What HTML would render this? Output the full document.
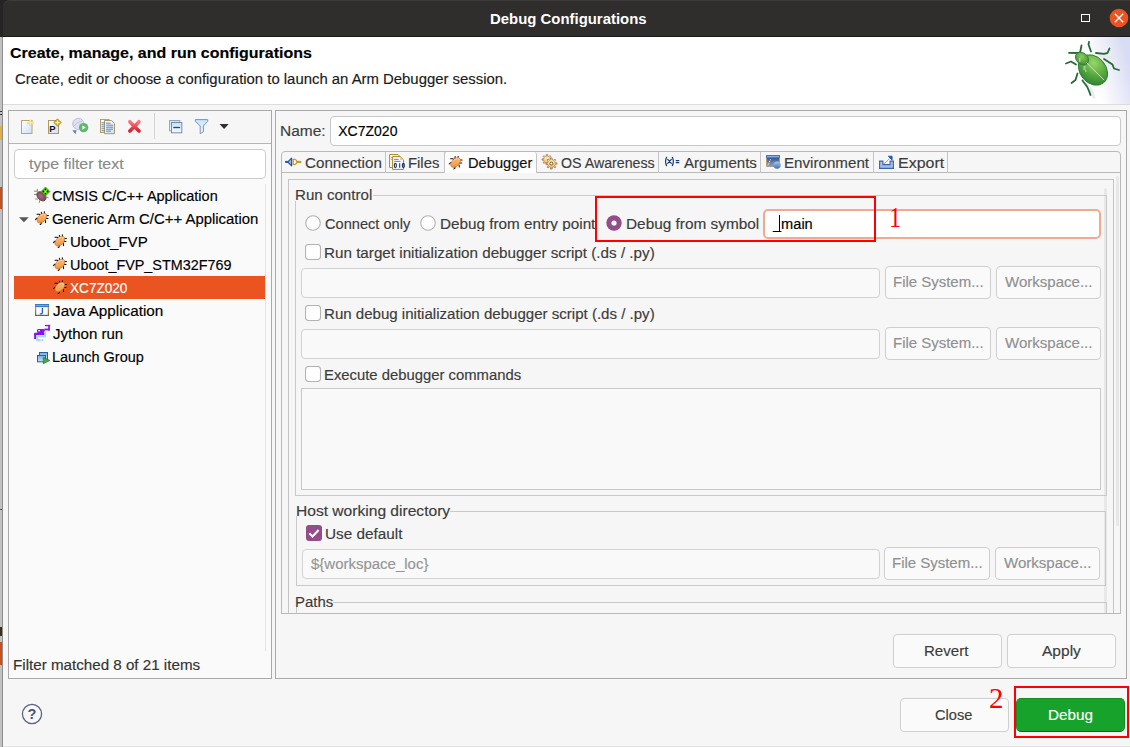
<!DOCTYPE html>
<html><head><meta charset="utf-8"><title>Debug Configurations</title>
<style>
html,body{margin:0;padding:0}
body{width:1130px;height:747px;overflow:hidden;position:relative;background:#f6f6f6;font-family:"Liberation Sans",sans-serif}
.a{position:absolute}
.t{position:absolute;white-space:nowrap;transform-origin:0 0;-webkit-text-stroke:0.15px currentColor}
</style></head><body>
<div class="a" style="left:0px;top:0px;width:14px;height:37px;background:#262424"></div>
<div class="a" style="left:0px;top:37px;width:3px;height:710px;background:#c2c2c2"></div>
<div class="a" style="left:2px;top:37px;width:1px;height:710px;background:#8e8e8e"></div>
<div class="a" style="left:0px;top:111px;width:2px;height:1px;background:#333"></div>
<div class="a" style="left:0px;top:114px;width:2px;height:1px;background:#333"></div>
<div class="a" style="left:0px;top:126px;width:2px;height:14px;background:#e0b050"></div>
<div class="a" style="left:0px;top:187px;width:2px;height:22px;background:#c8501c"></div>
<div class="a" style="left:0px;top:627px;width:2px;height:9px;background:#3a3020"></div>
<div class="a" style="left:0px;top:642px;width:2px;height:23px;background:#c8501c"></div>
<div class="a" style="left:0px;top:509px;width:2px;height:1px;background:#555"></div>
<div class="a" style="left:3px;top:0px;width:1127px;height:37px;background:#302d2d;border-top-left-radius:7px;box-shadow:inset 0 1px 0 #3d3a3a"></div>
<div class="a" style="left:3px;top:36px;width:1127px;height:1px;background:#1c1b1b"></div>
<div class="t" style="left:490.00px;top:11.53px;font-size:14.5px;line-height:14.5px;font-weight:700;color:#ffffff;transform:scaleX(1.0287);font-family:'Liberation Sans', sans-serif;-webkit-text-stroke:0">Debug Configurations</div>
<div class="a" style="left:1081px;top:13.5px;width:8px;height:8px;border:1.2px solid #fff;box-sizing:border-box;width:8.5px;height:8.5px"></div>
<svg class="a" style="left:1109px;top:8px" width="20" height="20" viewBox="0 0 20 20"><circle cx="10" cy="10" r="9.3" fill="#e95420"/><path d="M5.8 5.8L14.2 14.2M14.2 5.8L5.8 14.2" stroke="#fff" stroke-width="1.3"/></svg>
<div class="a" style="left:3px;top:37px;width:1127px;height:67px;background:#ffffff"></div>
<div class="a" style="left:3px;top:104px;width:1127px;height:1px;background:#dcdcdc"></div>
<div class="t" style="left:9.94px;top:45.65px;font-size:14px;line-height:14px;font-weight:700;color:#000000;transform:scaleX(1.1411);font-family:'Liberation Sans', sans-serif;">Create, manage, and run configurations</div>
<div class="t" style="left:15.14px;top:71.65px;font-size:14px;line-height:14px;font-weight:400;color:#1a1a1a;transform:scaleX(1.0628);font-family:'Liberation Sans', sans-serif;">Create, edit or choose a configuration to launch an Arm Debugger session.</div>
<svg class="a" style="left:1040px;top:37px" width="90" height="67" viewBox="1040 37 90 67">
<defs>
<linearGradient id="bgg" gradientUnits="userSpaceOnUse" x1="1096" y1="78" x2="1130" y2="68"><stop offset="0" stop-color="#ffffff"/><stop offset="0.3" stop-color="#f3f4fb"/><stop offset="1" stop-color="#d9ddf3"/></linearGradient>
<radialGradient id="bodyg" cx="0.35" cy="0.3" r="0.8"><stop offset="0" stop-color="#9ad66a"/><stop offset="0.5" stop-color="#58ac40"/><stop offset="1" stop-color="#2e7e30"/></radialGradient>
<radialGradient id="headg" cx="0.4" cy="0.4" r="0.7"><stop offset="0" stop-color="#8ccc5c"/><stop offset="1" stop-color="#3a8a34"/></radialGradient>
</defs>
<rect x="1040" y="37" width="90" height="67" fill="url(#bgg)"/>
<g stroke="#e6e8f2" stroke-width="3" fill="none" stroke-linecap="round" opacity="0.8">
<path d="M1100 56 L1112 58 L1114 52"/><path d="M1108 62 L1116 68 L1122 73"/><path d="M1086 84 L1091 90 L1094 97"/>
</g>
<g stroke="#236b34" stroke-width="1.8" fill="none" stroke-linecap="round" stroke-linejoin="round">
<path d="M1080 53 L1081.5 45.5"/>
<path d="M1079 53 L1069 52.8"/>
<path d="M1091 51.5 L1088.5 44.5 L1089 41.8"/>
<path d="M1096 53 L1104 53.8 L1107.5 53 L1109.5 48.5"/>
<path d="M1104 59 L1112.5 64.5 L1114 68.5 L1119 70"/>
<path d="M1076 64.5 L1071 61.5 L1066 63.5"/>
<path d="M1077.5 73.5 L1075.5 80 L1071.5 83"/>
<path d="M1082.5 80.5 L1087 86.5 L1089 91 L1090.5 95"/>
</g>
<ellipse cx="1093" cy="70" rx="16.6" ry="13" transform="rotate(50 1093 70)" fill="url(#bodyg)" stroke="#2e7a34" stroke-width="0.9"/>
<ellipse cx="1082" cy="58.5" rx="7.2" ry="5.6" transform="rotate(40 1082 58.5)" fill="url(#headg)" stroke="#2e7a34" stroke-width="0.8"/>
<path d="M1086.5 62.5 L1104 80" stroke="#d8f0c8" stroke-width="0.8"/>
<path d="M1079 59 h1.5 M1079 61 h1.5 M1083.5 67 h2 M1083.5 69 h2 M1085 71 h1.5" stroke="#e8f8d8" stroke-width="1"/>
</svg>
<div class="a" style="left:3px;top:105px;width:1127px;height:642px;background:#f6f6f6"></div>
<div class="a" style="left:8px;top:110px;width:264px;height:569px;border:1px solid #a9a9a9;box-sizing:border-box;background:#f6f6f6"></div>
<div class="a" style="left:9px;top:143px;width:262px;height:1px;background:#b5b5b5"></div>
<div class="a" style="left:9px;top:144px;width:262px;height:534px;background:#fafafa"></div>
<div class="a" style="left:154px;top:113px;width:1px;height:26px;background:#d4d4d4"></div>
<div class="a" style="left:14px;top:149px;width:252px;height:30px;background:#fff;border:1px solid #cdcdcd;box-sizing:border-box;border-radius:4px"></div>
<div class="t" style="left:29.26px;top:156.85px;font-size:14px;line-height:14px;font-weight:400;color:#8a8a8a;transform:scaleX(1.1357);font-family:'Liberation Sans', sans-serif;">type filter text</div>
<div class="a" style="left:265px;top:184px;width:1px;height:467px;background:#e2e2e2"></div>
<div class="a" style="left:14px;top:276px;width:251px;height:23px;background:#e95420"></div>
<div class="t" style="left:52.07px;top:188.75px;font-size:14px;line-height:14px;font-weight:400;color:#000;transform:scaleX(1.0336);font-family:'Liberation Sans', sans-serif;">CMSIS C/C++ Application</div>
<div class="t" style="left:52.05px;top:211.75px;font-size:14px;line-height:14px;font-weight:400;color:#000;transform:scaleX(1.0653);font-family:'Liberation Sans', sans-serif;">Generic Arm C/C++ Application</div>
<div class="t" style="left:69.64px;top:234.75px;font-size:14px;line-height:14px;font-weight:400;color:#000;transform:scaleX(1.0729);font-family:'Liberation Sans', sans-serif;">Uboot_FVP</div>
<div class="t" style="left:69.69px;top:257.75px;font-size:14px;line-height:14px;font-weight:400;color:#000;transform:scaleX(1.0274);font-family:'Liberation Sans', sans-serif;">Uboot_FVP_STM32F769</div>
<div class="t" style="left:70.49px;top:280.75px;font-size:14px;line-height:14px;font-weight:400;color:#fff;transform:scaleX(0.9711);font-family:'Liberation Sans', sans-serif;">XC7Z020</div>
<div class="t" style="left:52.56px;top:303.75px;font-size:14px;line-height:14px;font-weight:400;color:#000;transform:scaleX(1.0905);font-family:'Liberation Sans', sans-serif;">Java Application</div>
<div class="t" style="left:52.57px;top:326.75px;font-size:14px;line-height:14px;font-weight:400;color:#000;transform:scaleX(1.0740);font-family:'Liberation Sans', sans-serif;">Jython run</div>
<div class="t" style="left:51.61px;top:349.75px;font-size:14px;line-height:14px;font-weight:400;color:#000;transform:scaleX(1.0346);font-family:'Liberation Sans', sans-serif;">Launch Group</div>
<div class="t" style="left:13.46px;top:657.95px;font-size:14px;line-height:14px;font-weight:400;color:#333;transform:scaleX(1.0831);font-family:'Liberation Sans', sans-serif;">Filter matched 8 of 21 items</div>
<svg class="a" style="left:19px;top:216.8px" width="11" height="7"><path d="M0 0.3 L9.8 0.3 L4.9 5.2 Z" fill="#565656"/></svg>
<div class="a" style="left:275px;top:110px;width:852px;height:569px;border:1px solid #a9a9a9;box-sizing:border-box;background:#f6f6f6"></div>
<div class="t" style="left:280.13px;top:123.95px;font-size:14px;line-height:14px;font-weight:400;color:#3c3c3c;transform:scaleX(1.1055);font-family:'Liberation Sans', sans-serif;">Name:</div>
<div class="a" style="left:330px;top:116px;width:791px;height:30px;background:#fff;border:1px solid #c8c8c8;box-sizing:border-box;border-radius:4px"></div>
<div class="t" style="left:338.29px;top:123.95px;font-size:14px;line-height:14px;font-weight:400;color:#000;font-family:'Liberation Sans', sans-serif;">XC7Z020</div>
<div class="a" style="left:281px;top:151px;width:840px;height:463px;border:1px solid #b9b9b9;box-sizing:border-box;border-radius:4px 4px 0 0;background:#f6f6f6"></div>
<div class="a" style="left:282px;top:172px;width:838px;height:1px;background:#b9b9b9"></div>
<div class="a" style="left:288px;top:179px;width:826px;height:435px;border:1px solid #c4c4c4;border-bottom:none;box-sizing:border-box;background:#f6f6f6"></div>
<div class="a" style="left:385px;top:152px;width:1px;height:21px;background:#c4c4c4"></div>
<div class="t" style="left:304.83px;top:155.75px;font-size:14px;line-height:14px;font-weight:400;color:#3c3c3c;transform:scaleX(1.0852);font-family:'Liberation Sans', sans-serif;">Connection</div>
<div class="a" style="left:444px;top:152px;width:1px;height:21px;background:#c4c4c4"></div>
<div class="t" style="left:408.28px;top:155.75px;font-size:14px;line-height:14px;font-weight:400;color:#3c3c3c;transform:scaleX(1.0608);font-family:'Liberation Sans', sans-serif;">Files</div>
<div class="a" style="left:444px;top:152px;width:93px;height:21px;background:#fdfdfd;border:1px solid #c4c4c4;border-top:none;border-bottom:none;box-sizing:border-box;border-radius:3px 3px 0 0"></div>
<div class="t" style="left:467.50px;top:155.75px;font-size:14px;line-height:14px;font-weight:400;color:#111;transform:scaleX(1.0465);font-family:'Liberation Sans', sans-serif;">Debugger</div>
<div class="a" style="left:658px;top:152px;width:1px;height:21px;background:#c4c4c4"></div>
<div class="t" style="left:560.93px;top:155.75px;font-size:14px;line-height:14px;font-weight:400;color:#3c3c3c;transform:scaleX(1.0145);font-family:'Liberation Sans', sans-serif;">OS Awareness</div>
<div class="a" style="left:760px;top:152px;width:1px;height:21px;background:#c4c4c4"></div>
<div class="t" style="left:683.77px;top:155.75px;font-size:14px;line-height:14px;font-weight:400;color:#3c3c3c;transform:scaleX(1.0765);font-family:'Liberation Sans', sans-serif;">Arguments</div>
<div class="a" style="left:873px;top:152px;width:1px;height:21px;background:#c4c4c4"></div>
<div class="t" style="left:784.36px;top:155.75px;font-size:14px;line-height:14px;font-weight:400;color:#3c3c3c;transform:scaleX(1.0822);font-family:'Liberation Sans', sans-serif;">Environment</div>
<div class="a" style="left:947px;top:152px;width:1px;height:21px;background:#c4c4c4"></div>
<div class="t" style="left:897.59px;top:155.75px;font-size:14px;line-height:14px;font-weight:400;color:#3c3c3c;transform:scaleX(1.1400);font-family:'Liberation Sans', sans-serif;">Export</div>
<div class="a" style="left:1116px;top:176px;width:3px;height:350px;background:#e8e8e8;border-radius:1.5px"></div>
<div class="a" style="left:1104px;top:188px;width:3px;height:425px;background:#e8e8e8;border-radius:1.5px"></div>
<div class="a" style="left:295px;top:195px;width:812px;height:301px;border:1px solid #c9c9c9;box-sizing:border-box"></div>
<div class="a" style="left:294px;top:189px;width:79px;height:12px;background:#f6f6f6"></div>
<div class="t" style="left:294.96px;top:187.65px;font-size:14px;line-height:14px;font-weight:400;color:#3c3c3c;transform:scaleX(1.0790);font-family:'Liberation Sans', sans-serif;">Run control</div>
<svg class="a" style="left:305px;top:215px" width="16" height="16"><circle cx="8" cy="8" r="7.3" fill="#ffffff" stroke="#b2b2b2" stroke-width="1.1"/></svg>
<div class="t" style="left:325.46px;top:216.75px;font-size:14px;line-height:14px;font-weight:400;color:#3c3c3c;transform:scaleX(1.0423);font-family:'Liberation Sans', sans-serif;">Connect only</div>
<svg class="a" style="left:420px;top:215px" width="16" height="16"><circle cx="8" cy="8" r="7.3" fill="#ffffff" stroke="#b2b2b2" stroke-width="1.1"/></svg>
<div class="t" style="left:439.55px;top:216.75px;font-size:14px;line-height:14px;font-weight:400;color:#3c3c3c;transform:scaleX(1.0910);font-family:'Liberation Sans', sans-serif;width:154px;overflow:hidden;white-space:nowrap">Debug from entry point</div>
<svg class="a" style="left:606px;top:215px" width="16" height="16"><circle cx="8" cy="8" r="7.7" fill="#924d8b"/><circle cx="8" cy="8" r="2.6" fill="#fff"/></svg>
<div class="t" style="left:625.54px;top:216.75px;font-size:14px;line-height:14px;font-weight:400;color:#3c3c3c;transform:scaleX(1.0973);font-family:'Liberation Sans', sans-serif;">Debug from symbol</div>
<div class="a" style="left:763px;top:209px;width:338px;height:30px;background:#fff;border:2px solid #f2aa8e;box-sizing:border-box;border-radius:5px"></div>
<div class="t" style="left:773.22px;top:216.75px;font-size:14px;line-height:14px;font-weight:400;color:#000;transform:scaleX(1.0419);font-family:'Liberation Sans', sans-serif;">_main</div>
<div class="a" style="left:779px;top:215px;width:1px;height:17px;background:#000"></div>
<svg class="a" style="left:305px;top:244px" width="16" height="16"><rect x="0.5" y="0.5" width="15" height="15" rx="3" fill="#ffffff" stroke="#b2b2b2" stroke-width="1.1"/></svg>
<div class="t" style="left:324.45px;top:245.75px;font-size:14px;line-height:14px;font-weight:400;color:#3c3c3c;transform:scaleX(1.0869);font-family:'Liberation Sans', sans-serif;">Run target initialization debugger script (.ds / .py)</div>
<div class="a" style="left:301px;top:268px;width:579px;height:30px;background:#f9f9f9;border:1px solid #d2d2d2;box-sizing:border-box;border-radius:4px"></div>
<div class="a" style="left:885px;top:266px;width:106px;height:33px;background:#fafafa;border:1px solid #cfcfcf;box-sizing:border-box;border-radius:4px"></div><div class="t" style="left:892.77px;top:275.25px;font-size:14px;line-height:14px;font-weight:400;color:#909090;transform:scaleX(1.0684);font-family:'Liberation Sans', sans-serif;">File System...</div>
<div class="a" style="left:996px;top:266px;width:105px;height:33px;background:#fafafa;border:1px solid #cfcfcf;box-sizing:border-box;border-radius:4px"></div><div class="t" style="left:1004.93px;top:275.25px;font-size:14px;line-height:14px;font-weight:400;color:#909090;transform:scaleX(1.0737);font-family:'Liberation Sans', sans-serif;">Workspace...</div>
<svg class="a" style="left:305px;top:305px" width="16" height="16"><rect x="0.5" y="0.5" width="15" height="15" rx="3" fill="#ffffff" stroke="#b2b2b2" stroke-width="1.1"/></svg>
<div class="t" style="left:324.46px;top:306.75px;font-size:14px;line-height:14px;font-weight:400;color:#3c3c3c;transform:scaleX(1.0757);font-family:'Liberation Sans', sans-serif;">Run debug initialization debugger script (.ds / .py)</div>
<div class="a" style="left:301px;top:329px;width:579px;height:30px;background:#f9f9f9;border:1px solid #d2d2d2;box-sizing:border-box;border-radius:4px"></div>
<div class="a" style="left:885px;top:327px;width:106px;height:33px;background:#fafafa;border:1px solid #cfcfcf;box-sizing:border-box;border-radius:4px"></div><div class="t" style="left:892.77px;top:336.25px;font-size:14px;line-height:14px;font-weight:400;color:#909090;transform:scaleX(1.0684);font-family:'Liberation Sans', sans-serif;">File System...</div>
<div class="a" style="left:996px;top:327px;width:105px;height:33px;background:#fafafa;border:1px solid #cfcfcf;box-sizing:border-box;border-radius:4px"></div><div class="t" style="left:1004.93px;top:336.25px;font-size:14px;line-height:14px;font-weight:400;color:#909090;transform:scaleX(1.0737);font-family:'Liberation Sans', sans-serif;">Workspace...</div>
<svg class="a" style="left:305px;top:366px" width="16" height="16"><rect x="0.5" y="0.5" width="15" height="15" rx="3" fill="#ffffff" stroke="#b2b2b2" stroke-width="1.1"/></svg>
<div class="t" style="left:324.48px;top:367.75px;font-size:14px;line-height:14px;font-weight:400;color:#3c3c3c;transform:scaleX(1.0600);font-family:'Liberation Sans', sans-serif;">Execute debugger commands</div>
<div class="a" style="left:301px;top:388px;width:800px;height:102px;background:#f9f9f9;border:1px solid #c9c9c9;box-sizing:border-box"></div>
<div class="a" style="left:296px;top:511px;width:810px;height:75px;border:1px solid #c9c9c9;box-sizing:border-box"></div>
<div class="a" style="left:295px;top:504px;width:155px;height:12px;background:#f6f6f6"></div>
<div class="t" style="left:295.72px;top:503.75px;font-size:14px;line-height:14px;font-weight:400;color:#3c3c3c;transform:scaleX(1.1128);font-family:'Liberation Sans', sans-serif;">Host working directory</div>
<svg class="a" style="left:306px;top:525px" width="16" height="16"><rect x="0" y="0" width="16" height="16" rx="3" fill="#924d8b"/><path d="M3.4 8.3 L6.6 11.4 L12.6 5" stroke="#fff" stroke-width="2.1" fill="none"/></svg>
<div class="t" style="left:325.32px;top:526.85px;font-size:14px;line-height:14px;font-weight:400;color:#3c3c3c;transform:scaleX(1.0942);font-family:'Liberation Sans', sans-serif;">Use default</div>
<div class="a" style="left:302px;top:549px;width:578px;height:30px;background:#f9f9f9;border:1px solid #d2d2d2;box-sizing:border-box;border-radius:4px"></div>
<div class="t" style="left:311.44px;top:556.55px;font-size:14px;line-height:14px;font-weight:400;color:#959595;transform:scaleX(1.0701);font-family:'Liberation Sans', sans-serif;">${workspace_loc}</div>
<div class="a" style="left:884px;top:547px;width:106px;height:33px;background:#fafafa;border:1px solid #cfcfcf;box-sizing:border-box;border-radius:4px"></div><div class="t" style="left:891.77px;top:556.25px;font-size:14px;line-height:14px;font-weight:400;color:#909090;transform:scaleX(1.0684);font-family:'Liberation Sans', sans-serif;">File System...</div>
<div class="a" style="left:995px;top:547px;width:105px;height:33px;background:#fafafa;border:1px solid #cfcfcf;box-sizing:border-box;border-radius:4px"></div><div class="t" style="left:1003.93px;top:556.25px;font-size:14px;line-height:14px;font-weight:400;color:#909090;transform:scaleX(1.0737);font-family:'Liberation Sans', sans-serif;">Workspace...</div>
<div class="a" style="left:296px;top:602px;width:811px;height:12px;border:1px solid #c9c9c9;border-bottom:none;box-sizing:border-box"></div>
<div class="a" style="left:295px;top:594px;width:38px;height:12px;background:#f6f6f6"></div>
<div class="t" style="left:294.58px;top:594.65px;font-size:14px;line-height:14px;font-weight:400;color:#3c3c3c;transform:scaleX(1.0660);font-family:'Liberation Sans', sans-serif;">Paths</div>
<div class="a" style="left:281px;top:613px;width:840px;height:1px;background:#b9b9b9"></div>
<div class="a" style="left:893px;top:634px;width:109px;height:34px;background:#fafafa;border:1px solid #cfcfcf;box-sizing:border-box;border-radius:4px"></div><div class="t" style="left:924.06px;top:643.75px;font-size:14px;line-height:14px;font-weight:400;color:#3c3c3c;transform:scaleX(1.0754);font-family:'Liberation Sans', sans-serif;">Revert</div>
<div class="a" style="left:1007px;top:634px;width:109px;height:34px;background:#fafafa;border:1px solid #cfcfcf;box-sizing:border-box;border-radius:4px"></div><div class="t" style="left:1041.67px;top:643.75px;font-size:14px;line-height:14px;font-weight:400;color:#3c3c3c;transform:scaleX(1.1097);font-family:'Liberation Sans', sans-serif;">Apply</div>
<svg class="a" style="left:21px;top:703px" width="22" height="22"><circle cx="11" cy="11" r="9.6" fill="#f8f8fa" stroke="#5a6585" stroke-width="1.3"/><text x="11" y="16.2" text-anchor="middle" font-family="Liberation Sans" font-weight="700" font-size="14.5" fill="#46527a">?</text></svg>
<div class="a" style="left:900px;top:698px;width:109px;height:34px;background:#fafafa;border:1px solid #cfcfcf;box-sizing:border-box;border-radius:4px"></div><div class="t" style="left:935.26px;top:707.75px;font-size:14px;line-height:14px;font-weight:400;color:#3c3c3c;transform:scaleX(1.0447);font-family:'Liberation Sans', sans-serif;">Close</div>
<div class="a" style="left:1016px;top:698px;width:109px;height:34px;background:#17a22b;border:1px solid #12901f;border-bottom-color:#0b6a14;box-sizing:border-box;border-radius:5px"></div>
<div class="a" style="left:3px;top:746px;width:1127px;height:1px;background:#e2e2e2"></div>
<div class="t" style="left:1048.05px;top:707.55px;font-size:14px;line-height:14px;font-weight:400;color:#ffffff;transform:scaleX(1.0892);font-family:'Liberation Sans', sans-serif;">Debug</div>
<svg width="0" height="0" style="position:absolute"><defs>
<linearGradient id="pageg" x1="0" y1="0" x2="1" y2="1"><stop offset="0" stop-color="#ffffff"/><stop offset="1" stop-color="#cfdff5"/></linearGradient>
<linearGradient id="bugg" x1="0" y1="0" x2="1" y2="1"><stop offset="0" stop-color="#fff0dc"/><stop offset="0.4" stop-color="#f9b46a"/><stop offset="1" stop-color="#ee8420"/></linearGradient>
<linearGradient id="xg" x1="0" y1="0" x2="0" y2="1"><stop offset="0" stop-color="#f77a7e"/><stop offset="1" stop-color="#d4242c"/></linearGradient>
<linearGradient id="blueg" x1="0" y1="0" x2="0" y2="1"><stop offset="0" stop-color="#c4e4fb"/><stop offset="1" stop-color="#f4faff"/></linearGradient>
<linearGradient id="lgg" x1="0" y1="0" x2="1" y2="1"><stop offset="0" stop-color="#a9cbe8"/><stop offset="1" stop-color="#4d86bb"/></linearGradient>
<symbol id="bug" viewBox="0 0 20 20">
 <g stroke="#0a0a0a" stroke-width="1.05" stroke-linecap="round" fill="none">
  <path d="M9.4 5.2v2.6M12.4 4.8v2.8M13.8 8.5h2.6M13.8 11.5h2.2M5 7.3h2.3l1.2 1.3M6.2 11.3H4.8l-1.3 1.3M13.3 13.4l0.3 2.2M9.4 15.3l-0.3 1.7-0.9 0.5"/>
 </g>
 <ellipse cx="9.9" cy="11.1" rx="3.7" ry="5.9" transform="rotate(45 9.9 11.1)" fill="url(#bugg)" stroke="#c4621c" stroke-width="0.55"/>
 <path d="M8 10.5 L12 8.2" stroke="#d88a50" stroke-width="0.5"/>
</symbol>
</defs></svg>
<svg class="a" style="left:18px;top:116px" width="216" height="22" viewBox="18 116 216 22">
 <rect x="21.5" y="120.5" width="10.5" height="13" fill="url(#pageg)" stroke="#b8a66e" stroke-width="1"/>
 <path d="M30.4 119.8v6M27.4 122.8h6" stroke="#f0d070" stroke-width="2.2"/><path d="M30.4 120.3v5M27.9 122.8h5" stroke="#fff6c8" stroke-width="0.8"/>
 <rect x="48.5" y="120.5" width="10" height="13" fill="url(#pageg)" stroke="#a89a66" stroke-width="1"/>
 <text x="49.3" y="132.3" font-family="Liberation Sans" font-weight="700" font-size="9.5" fill="#111">P</text>
 <path d="M57.5 118.8l3.7 3.7-3.7 3.7-3.7-3.7z" fill="#e0b030" stroke="#8a6a10" stroke-width="0.6"/><path d="M57.5 120.3v4.4M55.3 122.5h4.4" stroke="#fff4b0" stroke-width="1"/>
 <circle cx="78.3" cy="123.9" r="5.6" fill="#dfe0f2" stroke="#b4b8da" stroke-width="0.9"/>
 <path d="M74 126 Q77 122 82 121" stroke="#c8b8e0" stroke-width="0.8" fill="none"/>
 <circle cx="83.6" cy="127.6" r="4.7" fill="#62b76e"/><path d="M82.4 125.4v4.4l3.4-2.2z" fill="#fff"/>
 <path d="M72.3 130.2h4.2l-1 4.1z" fill="#5d82c0"/>
 <rect x="100.5" y="119.5" width="8.5" height="13" fill="#f8f8f4" stroke="#b5a26a" stroke-width="1"/>
 <path d="M104.5 120.5h7l3 3v10.2h-10z" fill="url(#pageg)" stroke="#a89a66" stroke-width="1"/>
 <path d="M101.5 122.8h3M101.5 124.8h3M101.5 126.8h3M101.5 128.8h3M101.5 130.8h3M106 123.2h4.5M106 125.2h7M106 127.2h7M106 129.2h7M106 131.2h5" stroke="#5878b0" stroke-width="0.9"/>
 <path d="M129.8 121.7l9.2 9.2M139 121.7l-9.2 9.2" stroke="url(#xg)" stroke-width="3.6" stroke-linecap="round"/>
 <rect x="169.5" y="120.5" width="10.3" height="10.3" fill="url(#blueg)" stroke="#93a6c2" stroke-width="1"/>
 <rect x="171.5" y="122.5" width="10.3" height="10.3" fill="url(#blueg)" stroke="#7c8ca8" stroke-width="1"/>
 <path d="M173.3 127.5h6.8" stroke="#1d4a82" stroke-width="1.3"/>
 <path d="M195.3 119.6h12.4v1.8l-4.3 4.5v5.8l-3.2 2v-7.8l-4.9-4.5z" fill="url(#blueg)" stroke="#8090b2" stroke-width="1" stroke-linejoin="round"/>
 <path d="M219.5 123.9h9.2l-4.6 5z" fill="#2e2e2e"/>
</svg>
<svg class="a" style="left:30px;top:184px" width="24" height="22" viewBox="0 0 24 22">
 <g stroke="#8e8c6c" stroke-width="1" stroke-linecap="round" fill="none"><path d="M7.3 5.3v2.5M4.3 7.2h2.5M4.3 10.4h2.8M5.5 15h2.5l0.8-1M9.2 18.5l1-3M16.5 13l1.7 0.7M13.8 16.8l-0.5-1.5"/></g>
 <defs><radialGradient id="cmg" cx="0.45" cy="0.45" r="0.6"><stop offset="0" stop-color="#a86a88"/><stop offset="1" stop-color="#7e3a58"/></radialGradient><radialGradient id="chg" cx="0.5" cy="0.5" r="0.5"><stop offset="0" stop-color="#b8f040"/><stop offset="1" stop-color="#22c418"/></radialGradient></defs><ellipse cx="11.4" cy="12.3" rx="3.7" ry="5.4" transform="rotate(-45 11.4 12.3)" fill="url(#cmg)" stroke="#5e4a2a" stroke-width="0.8"/>
 <path d="M15.5 3l4.5 4.5-4.5 4.5-4.5-4.5z" fill="url(#chg)" stroke="#1e9a10" stroke-width="0.6"/>
 <circle cx="15.5" cy="5.4" r="0.9" fill="#000"/><circle cx="13.4" cy="7.5" r="0.9" fill="#000"/><circle cx="17.6" cy="7.5" r="0.9" fill="#000"/><circle cx="15.5" cy="9.6" r="0.9" fill="#000"/>
</svg>
<svg class="a" style="left:31.8px;top:206.5px" width="20" height="20" viewBox="0 0 20 20"><use href="#bug"/></svg>
<svg class="a" style="left:50px;top:230px" width="20" height="20" viewBox="0 0 20 20"><use href="#bug"/></svg>
<svg class="a" style="left:50px;top:253px" width="20" height="20" viewBox="0 0 20 20"><use href="#bug"/></svg>
<svg class="a" style="left:50px;top:276px" width="20" height="20" viewBox="0 0 20 20"><use href="#bug"/></svg>
<svg class="a" style="left:33px;top:302px" width="18" height="44" viewBox="33 302 18 44">
 <defs><linearGradient id="jbord" x1="0" y1="0" x2="0" y2="1"><stop offset="0" stop-color="#d8a848"/><stop offset="1" stop-color="#6e6434"/></linearGradient>
 <linearGradient id="lgw" x1="0" y1="0" x2="0" y2="1"><stop offset="0" stop-color="#78aee0"/><stop offset="1" stop-color="#c4e8fa"/></linearGradient></defs>
 <rect x="35.6" y="304.6" width="12.8" height="10.8" fill="#f4faff" stroke="url(#jbord)" stroke-width="1.2"/>
 <rect x="35" y="304" width="14" height="3.1" fill="#3a78c4"/>
 <path d="M35.6 305.6h12.8" stroke="#58b6ee" stroke-width="1"/>
 <path d="M42.4 308.3v4.3q0 1.2-1.2 1.2h-0.9" stroke="#2a5ca8" stroke-width="1.3" fill="none" stroke-linecap="round"/>
 <g fill="#8a10fa">
  <rect x="45" y="324.9" width="5.2" height="1.3"/>
  <rect x="48.2" y="324.9" width="1.7" height="5.6"/>
  <rect x="44.3" y="328.6" width="5.4" height="1.8"/>
  <rect x="37" y="328.9" width="7.6" height="4.2" rx="1.4"/>
  <rect x="34.3" y="332.8" width="10.8" height="2.3" rx="0.6"/>
  <rect x="34.1" y="333.4" width="2.1" height="5.6" rx="0.5"/>
 </g>
 <rect x="38.2" y="330.1" width="1.8" height="1.2" fill="#fff"/>
 <g fill="#a6dafc">
  <rect x="44.2" y="331.4" width="1.9" height="5.2"/>
  <rect x="36.4" y="335.4" width="9.7" height="1.9"/>
  <rect x="36.4" y="335.4" width="1.8" height="5.4"/>
  <rect x="36.4" y="339" width="6.8" height="2.2" rx="0.6"/>
 </g>
 <rect x="40.3" y="339.5" width="1.6" height="1" fill="#fff"/>
</svg>
<svg class="a" style="left:35px;top:350px" width="17" height="16" viewBox="35 350 17 16">
 <rect x="39.5" y="352.5" width="8" height="7" fill="url(#lgw)" stroke="#2a5f98" stroke-width="1"/>
 <rect x="37.5" y="355.5" width="8" height="6.3" fill="url(#lgw)" stroke="#2a5f98" stroke-width="1"/>
 <path d="M43.3 357.3v6.4l6.4-3.3z" fill="#4aa84a" stroke="#1e7a2c" stroke-width="0.7" stroke-linejoin="round"/>
</svg>
<svg class="a" style="left:283px;top:152px" width="670" height="20" viewBox="283 152 670 20">
<defs>
<linearGradient id="gearg" x1="0" y1="0" x2="0" y2="1"><stop offset="0" stop-color="#fffbc8"/><stop offset="1" stop-color="#f2bd5c"/></linearGradient>
<linearGradient id="envg" x1="0" y1="0" x2="0" y2="1"><stop offset="0" stop-color="#1a3a7c"/><stop offset="1" stop-color="#9aa6c0"/></linearGradient>
<linearGradient id="envc" x1="0" y1="0" x2="0" y2="1"><stop offset="0" stop-color="#a8c8ec"/><stop offset="1" stop-color="#3a72bc"/></linearGradient>
</defs>
 <path d="M285.2 161.9h2.6l3.8-3.7v7.6l-3.8-3.7" fill="#9eb6e2" stroke="#2a55b0" stroke-width="1.2" stroke-linejoin="round"/>
 <path d="M285.2 161.9h3" stroke="#2a55b0" stroke-width="2"/>
 <path d="M295 159.3h-1.8v5.2h1.8l1.8-1.6v-2z" fill="#fff" stroke="#c8961a" stroke-width="1.2"/>
 <path d="M296.8 161.9h4.5" stroke="#c8961a" stroke-width="2"/>
 <path d="M389.6 154.5h8.4l1.8 1.8v11.2h-10.2z" fill="#fafaf6" stroke="#b08a30" stroke-width="1"/>
 <path d="M392.6 156.6h7.6l3.3 3.3v9.5h-10.9z" fill="#f6f8fe" stroke="#a8862c" stroke-width="1"/>
 <path d="M400.2 156.6v3.3h3.3z" fill="#e8c870"/>
 <path d="M391 157.5h1.5M391 159.4h1.5" stroke="#7890c8" stroke-width="0.8"/>
 <path d="M394.2 159.4h4.3M394.2 161.4h6.3" stroke="#5a74b0" stroke-width="0.9"/>
 <g fill="none" stroke="#10306a" stroke-width="1.05">
  <rect x="394.4" y="163.5" width="1.9" height="4" rx="0.9"/>
  <path d="M399.7 163.2v4.6"/>
  <rect x="402.4" y="163.5" width="1.9" height="4" rx="0.9"/>
 </g>
 <svg x="445.7" y="151.4" width="20" height="20" viewBox="0 0 20 20"><use href="#bug"/></svg>
 <path d="M550.17 158.26 L550.35 158.94 L551.96 158.84 L551.96 160.16 L550.35 160.06 L550.17 160.74 L550.12 160.86 L549.77 161.48 L550.97 162.54 L550.04 163.47 L548.98 162.27 L548.36 162.62 L548.24 162.67 L547.56 162.85 L547.66 164.46 L546.34 164.46 L546.44 162.85 L545.76 162.67 L545.64 162.62 L545.02 162.27 L543.96 163.47 L543.03 162.54 L544.23 161.48 L543.88 160.86 L543.83 160.74 L543.65 160.06 L542.04 160.16 L542.04 158.84 L543.65 158.94 L543.83 158.26 L543.88 158.14 L544.23 157.52 L543.03 156.46 L543.96 155.53 L545.02 156.73 L545.64 156.38 L545.76 156.33 L546.44 156.15 L546.34 154.54 L547.66 154.54 L547.56 156.15 L548.24 156.33 L548.36 156.38 L548.98 156.73 L550.04 155.53 L550.97 156.46 L549.77 157.52 L550.12 158.14Z" fill="url(#gearg)" stroke="#9a6a52" stroke-width="0.75" stroke-linejoin="round"/>
 <path d="M555.03 162.08 L555.25 162.86 L556.95 162.76 L556.95 164.24 L555.25 164.14 L555.03 164.92 L554.97 165.06 L554.57 165.77 L555.85 166.90 L554.80 167.95 L553.67 166.67 L552.96 167.07 L552.82 167.13 L552.04 167.35 L552.14 169.05 L550.66 169.05 L550.76 167.35 L549.98 167.13 L549.84 167.07 L549.13 166.67 L548.00 167.95 L546.95 166.90 L548.23 165.77 L547.83 165.06 L547.77 164.92 L547.55 164.14 L545.85 164.24 L545.85 162.76 L547.55 162.86 L547.77 162.08 L547.83 161.94 L548.23 161.23 L546.95 160.10 L548.00 159.05 L549.13 160.33 L549.84 159.93 L549.98 159.87 L550.76 159.65 L550.66 157.95 L552.14 157.95 L552.04 159.65 L552.82 159.87 L552.96 159.93 L553.67 160.33 L554.80 159.05 L555.85 160.10 L554.57 161.23 L554.97 161.94Z" fill="url(#gearg)" stroke="#9a6a52" stroke-width="0.75" stroke-linejoin="round"/>
 <circle cx="551.4" cy="163.5" r="1.5" fill="#fff" stroke="#5a3a2a" stroke-width="0.9"/>
 <g fill="none" stroke="#1d3c70" stroke-width="1.25" stroke-linecap="round">
  <path d="M666.6 157.3q-2.2 4.2 0 8.3"/>
  <path d="M672.3 157.3q2.2 4.2 0 8.3"/>
  <path d="M667.7 159.4l3.6 3.9M671.3 159.4l-3.6 3.9"/>
  <path d="M676.2 160.5h2.6M676.2 162.5h2.6"/>
 </g>
 <rect x="766.2" y="155.2" width="13.6" height="11.3" fill="url(#envg)"/>
 <path d="M766.6 158v8.4M779.4 158v7" stroke="#c8a050" stroke-width="0.9"/>
 <path d="M766.6 166.2h8" stroke="#8a7a50" stroke-width="0.8"/>
 <rect x="766.2" y="155.2" width="13.6" height="2.9" fill="#3c7cc8"/>
 <path d="M767 156.6h12" stroke="#8ec0f0" stroke-width="0.9"/>
 <path d="M768 165.3l2.8-6.6" stroke="#fff" stroke-width="0.9" stroke-dasharray="1 0.8"/>
 <circle cx="777" cy="165.1" r="3.7" fill="url(#envc)"/>
 <path d="M879.6 161.1v7.3h13.8v-7.3h-3.3v3.5h-7.2v-3.5z" fill="#a6bfe6" stroke="#3e64a8" stroke-width="1.1" stroke-linejoin="miter"/>
 <path d="M884.4 163.6l5-5" stroke="#3a3aa0" stroke-width="0.9" stroke-dasharray="0.9 0.6"/>
 <path d="M888.2 156.2h3.9v3.9z" fill="#1a5aa8" stroke="#1a5aa8" stroke-width="0.8" stroke-linejoin="round"/>
</svg>
<div class="a" style="left:595px;top:196px;width:281px;height:46px;border:2px solid #ff0000;box-sizing:border-box"></div>
<div class="a" style="left:1014px;top:686px;width:115px;height:52px;border:2px solid #ff0000;box-sizing:border-box"></div>
<div class="t" style="left:888.65px;top:202.63px;font-size:29.5px;line-height:29.5px;font-weight:400;color:#ff0000;transform:scaleX(0.8281);font-family:'Liberation Serif', serif;-webkit-text-stroke:0">1</div>
<div class="t" style="left:988.93px;top:683.63px;font-size:29.5px;line-height:29.5px;font-weight:400;color:#ff0000;transform:scaleX(0.9809);font-family:'Liberation Serif', serif;-webkit-text-stroke:0">2</div>
</body></html>
